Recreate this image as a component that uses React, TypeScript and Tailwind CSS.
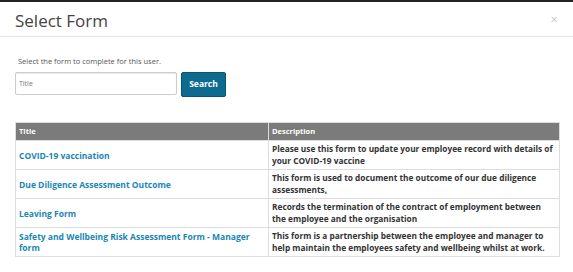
export default function App() {
  const forms = [
    {
      title: "COVID-19 vaccination",
      desc: "Please use this form to update your employee record with details of your COVID-19 vaccine",
    },
    {
      title: "Due Diligence Assessment Outcome",
      desc: "This form is used to document the outcome of our due diligence assessments,",
    },
    {
      title: "Leaving Form",
      desc: "Records the termination of the contract of employment between the employee and the organisation",
    },
    {
      title: "Safety and Wellbeing Risk Assessment Form - Manager form",
      desc: "This form is a partnership between the employee and manager to help maintain the employees safety and wellbeing whilst at work.",
    },
  ];

  return (
    <div className="h-[272px] w-[573px] overflow-hidden border-t-2 border-[#222] bg-white font-['Open_Sans',sans-serif] text-[#333]">
      {/* header */}
      <div className="flex h-[35px] items-center justify-between border-b border-[#e5e5e5] pl-[15px] pr-[15px] pt-[3px]">
        <h1 className="text-[17px] leading-none text-[#444]">Select Form</h1>
        <span className="-mt-[3px] text-[13px] leading-none text-[#c8c8c8]">×</span>
      </div>

      <div className="px-[15px] pt-[19px]">
        <p className="pl-[3px] text-[7.5px] text-[#555]">Select the form to complete for this user.</p>

        <div className="mt-[5px] flex items-start gap-[4px]">
          <input
            placeholder="Title"
            className="h-[23px] w-[162px] rounded-[2px] border border-[#ccc] px-[3px] text-[7px] shadow-[inset_0_1px_1px_rgba(0,0,0,0.08)] placeholder:text-[#777]"
          />
          <button className="h-[25px] w-[45px] rounded-[2px] border border-[#0a5470] bg-[#0c6b8e] text-[8.5px] font-bold text-white">
            Search
          </button>
        </div>

        <table className="mt-[25px] w-[545px] border-collapse border border-[#ddd] text-left">
          <thead>
            <tr className="bg-[#7b7b7b] text-[7.5px] font-bold text-white">
              <th className="h-[18px] w-[253px] border-r border-[#ddd] px-[3px] py-0">Title</th>
              <th className="h-[18px] px-[3px] py-0">Description</th>
            </tr>
          </thead>
          <tbody>
            {forms.map((f) => (
              <tr key={f.title} className="h-[29px] border-t border-[#ddd]">
                <td className="border-r border-[#ddd] px-[3px] align-middle text-[8.5px] font-bold leading-[11px] text-[#1a86b6]">
                  {f.title}
                </td>
                <td className="pl-[3px] pr-[6px] align-middle text-[8.3px] font-bold leading-[12px] text-[#333]">
                  {f.desc}
                </td>
              </tr>
            ))}
          </tbody>
        </table>
      </div>
    </div>
  );
}
